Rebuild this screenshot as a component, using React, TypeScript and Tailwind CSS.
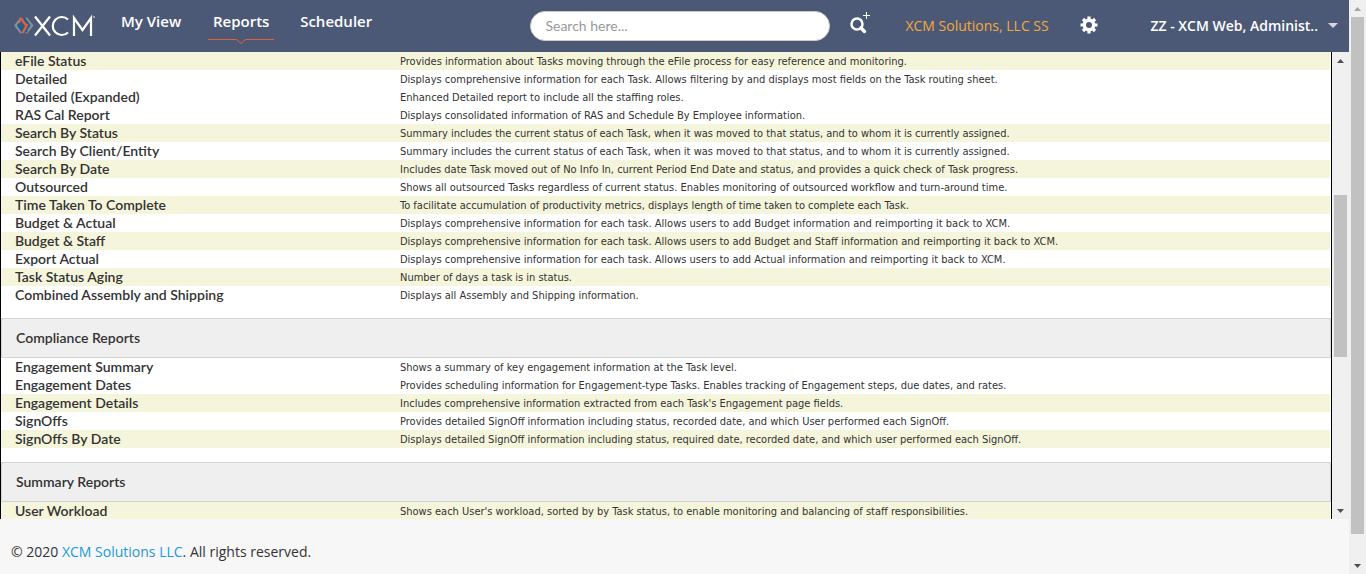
import React from "react";

type Report = { name: string; text: string; shaded?: boolean };

const taskReports: Report[] = [
  { name: "eFile Status", text: "Provides information about Tasks moving through the eFile process for easy reference and monitoring.", shaded: true },
  { name: "Detailed", text: "Displays comprehensive information for each Task. Allows filtering by and displays most fields on the Task routing sheet." },
  { name: "Detailed (Expanded)", text: "Enhanced Detailed report to include all the staffing roles." },
  { name: "RAS Cal Report", text: "Displays consolidated information of RAS and Schedule By Employee information." },
  { name: "Search By Status", text: "Summary includes the current status of each Task, when it was moved to that status, and to whom it is currently assigned.", shaded: true },
  { name: "Search By Client/Entity", text: "Summary includes the current status of each Task, when it was moved to that status, and to whom it is currently assigned." },
  { name: "Search By Date", text: "Includes date Task moved out of No Info In, current Period End Date and status, and provides a quick check of Task progress.", shaded: true },
  { name: "Outsourced", text: "Shows all outsourced Tasks regardless of current status. Enables monitoring of outsourced workflow and turn-around time." },
  { name: "Time Taken To Complete", text: "To facilitate accumulation of productivity metrics, displays length of time taken to complete each Task.", shaded: true },
  { name: "Budget & Actual", text: "Displays comprehensive information for each task. Allows users to add Budget information and reimporting it back to XCM." },
  { name: "Budget & Staff", text: "Displays comprehensive information for each task. Allows users to add Budget and Staff information and reimporting it back to XCM.", shaded: true },
  { name: "Export Actual", text: "Displays comprehensive information for each task. Allows users to add Actual information and reimporting it back to XCM." },
  { name: "Task Status Aging", text: "Number of days a task is in status.", shaded: true },
  { name: "Combined Assembly and Shipping", text: "Displays all Assembly and Shipping information." },
];

const complianceReports: Report[] = [
  { name: "Engagement Summary", text: "Shows a summary of key engagement information at the Task level." },
  { name: "Engagement Dates", text: "Provides scheduling information for Engagement-type Tasks. Enables tracking of Engagement steps, due dates, and rates." },
  { name: "Engagement Details", text: "Includes comprehensive information extracted from each Task's Engagement page fields.", shaded: true },
  { name: "SignOffs", text: "Provides detailed SignOff information including status, recorded date, and which User performed each SignOff." },
  { name: "SignOffs By Date", text: "Displays detailed SignOff information including status, required date, recorded date, and which user performed each SignOff.", shaded: true },
];

const summaryReports: Report[] = [
  { name: "User Workload", text: "Shows each User's workload, sorted by by Task status, to enable monitoring and balancing of staff responsibilities.", shaded: true },
];

function ReportTable({ rows }: { rows: Report[] }) {
  return (
    <table className="w-full table-fixed border-collapse">
      <colgroup>
        <col className="w-[399px]" />
        <col />
      </colgroup>
      <tbody>
        {rows.map((r) => (
          <tr key={r.name} className={r.shaded ? "h-[18px] bg-[#f5f5dc]" : "h-[18px]"}>
            <td className="p-0 pl-[14px] text-[14px] leading-[18px] font-semibold">
              <a href="#report" className="block h-[18px]">{r.name}</a>
            </td>
            <td className="p-0 pt-[2px] font-['DejaVu_Sans_Condensed','DejaVu_Sans',sans-serif] text-[11px] leading-4 whitespace-nowrap">
              {r.text}
            </td>
          </tr>
        ))}
      </tbody>
    </table>
  );
}

function SectionTitle({ children }: { children: React.ReactNode }) {
  return (
    <h2 className="-mr-px mt-[14px] flex h-10 items-center border border-[#d3d3d3] bg-[#efefef] px-[14px] pb-[2px] text-[14px] font-semibold">
      {children}
    </h2>
  );
}

function Arrow({ down, dim }: { down?: boolean; dim?: boolean }) {
  return (
    <svg viewBox="0 0 17 17" className={dim ? "size-[17px] shrink-0 fill-[#a3a3a3]" : "size-[17px] shrink-0 fill-[#505050]"} aria-hidden="true">
      <path d={down ? "M5 7h7L8.500 11z" : "M5 11h7L8.500 7z"} />
    </svg>
  );
}

function ScrollRail({ before, size, dimTop }: { before: number; size: number; dimTop?: boolean }) {
  return (
    <div className="flex w-[17px] shrink-0 flex-col bg-[#f0f0f0]" aria-hidden="true">
      <Arrow dim={dimTop} />
      <div className="flex flex-1 flex-col items-center">
        <div style={{ flexGrow: before }} />
        <div className="w-[13px] bg-[#c1c1c1]" style={{ flexGrow: size }} />
        <div style={{ flexGrow: 100 - before - size }} />
      </div>
      <Arrow down />
    </div>
  );
}

function Logo() {
  return (
    <svg viewBox="0 0 82 24" className="h-6 w-[82px]" role="img" aria-label="XCM">
      <g fill="none" strokeWidth="2.400">
        <path d="M7.500 4 1.500 11.500 7.500 19" stroke="#8d8f97" />
        <path d="M12 4l6 7.500-6 7.500" stroke="#8d8f97" />
        <path d="M7.500 7 4.500 11.500l4 6" stroke="#1f5c8c" />
        <path d="M10.500 5l4.500 6-3 5" stroke="#1f5c8c" />
        <path d="M6.500 4l5.500 7" stroke="#e0623c" />
        <path d="M8 11l5 7" stroke="#1f5c8c" />
        <path d="M13.500 10l-5 9" stroke="#e0623c" />
        <path d="M6.500 4l-1 5" stroke="#e0623c" strokeWidth="1.500" />
      </g>
      <g fill="none" stroke="#fff" strokeWidth="2.200">
        <path d="M21 2.500 36 21.500M36 2.500 21 21.500" />
        <path d="M54 5.500a9 9 0 1 0 0 13" />
        <path d="M60 22V4l8.500 12L77 4v18" />
      </g>
      <circle cx="80" cy="3" r="0.800" fill="#fff" />
    </svg>
  );
}

function Gear() {
  return (
    <svg viewBox="0 0 18 18" className="size-[18px]" fill="none" stroke="#fff" aria-hidden="true">
      <circle cx="9" cy="9" r="4.700" strokeWidth="3.400" />
      <path d="M9 0.500v4M9 13.500v4M0.500 9h4M13.500 9h4M3 3l2.800 2.800M12.200 12.200 15 15M15 3l-2.800 2.800M5.800 12.200 3 15" strokeWidth="3.200" />
    </svg>
  );
}

export default function App() {
  return (
    <div className="flex h-screen bg-white font-[Lato,sans-serif] text-[#333]">
      <div className="flex min-w-0 flex-1 flex-col">
        <header className="flex h-[52px] shrink-0 items-center bg-[#4c5976] font-['Open_Sans',sans-serif] text-[14px] font-semibold text-white">
          <a href="#home" className="ml-[14px] shrink-0">
            <Logo />
          </a>
          <nav className="ml-[25px] flex h-full items-start pt-[11px] text-[15px] leading-5">
            <a href="#view">My View</a>
            <a href="#reports" className="ml-[27px] flex w-[66px] flex-col items-center" aria-current="page">
              Reports
              <svg viewBox="0 0 66 6" className="mt-[7px] h-[6px] w-[66px]" fill="none" stroke="#e0623c">
                <path d="M0 1.500h28.500l4.500 4 4.500-4H66" />
              </svg>
            </a>
            <a href="#scheduler" className="ml-[26px]">Scheduler</a>
          </nav>
          <div className="ml-auto flex items-center">
            <input
              type="search"
              aria-label="Search"
              placeholder="Search here..."
              className="h-[30px] w-[300px] rounded-full border border-[#ccc] bg-white px-[14px] pb-[2px] font-[Lato,sans-serif] text-[14px] font-normal text-[#333] placeholder:text-[#999]"
            />
            <button type="button" aria-label="Advanced search" className="ml-5 pb-1">
              <svg viewBox="0 0 22 24" className="h-6 w-[22px]" fill="none" stroke="#fff">
                <circle cx="7" cy="12" r="5.500" strokeWidth="2.500" />
                <path d="M11 16l3.500 3.500" strokeWidth="3.500" strokeLinecap="round" />
                <path d="M16.500 0v7M13 3.500h7" strokeWidth="1" />
              </svg>
            </button>
            <a href="#firm" className="ml-[33px] w-[143px] pb-[2px] font-normal whitespace-nowrap text-[#f2a93b]">XCM Solutions, LLC SS</a>
            <button type="button" aria-label="Settings" className="ml-8 pb-[2px]">
              <Gear />
            </button>
            <button type="button" className="ml-[52px] mr-[11px] flex items-center justify-between gap-[10px] pb-[2px] font-semibold whitespace-nowrap">
              ZZ - XCM Web, Administ..
              <svg viewBox="0 0 10 5" className="h-[5px] w-[10px] fill-[#d5d9e0]" aria-hidden="true">
                <path d="M0 0h10L5 5z" />
              </svg>
            </button>
          </div>
        </header>

        <div className="flex min-h-0 flex-1">
          <main className="min-w-0 flex-1 overflow-hidden border-x border-black pr-px">
            <ReportTable rows={taskReports} />
            <SectionTitle>Compliance Reports</SectionTitle>
            <ReportTable rows={complianceReports} />
            <SectionTitle>Summary Reports</SectionTitle>
            <ReportTable rows={summaryReports} />
          </main>
          <ScrollRail before={29} size={37.4} />
        </div>

        <footer className="flex h-[55px] shrink-0 items-center bg-[#f7f7f7] px-[11px] font-['Open_Sans',sans-serif] text-[14px]">
          <p className="pt-[10px]">
            © 2020 <a href="#xcm" className="text-[#2199d6]">XCM Solutions LLC</a>. All rights reserved.
          </p>
        </footer>
      </div>
      <ScrollRail before={0} size={95.8} dimTop />
    </div>
  );
}
